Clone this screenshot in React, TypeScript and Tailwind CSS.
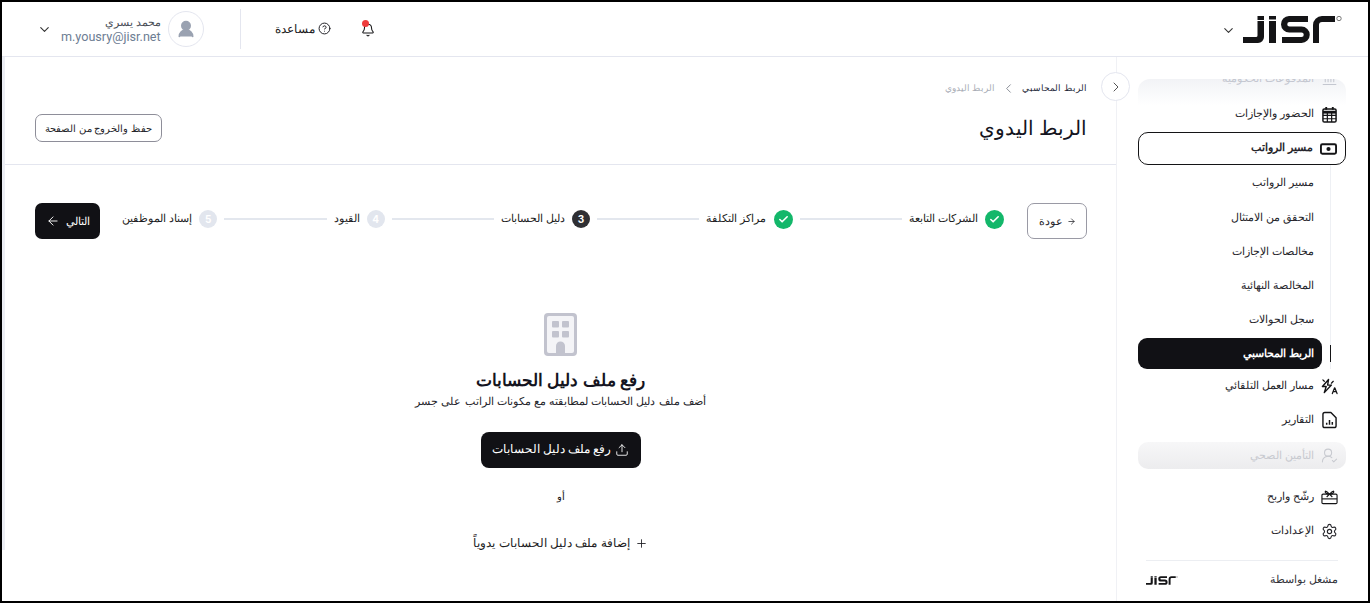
import React from "react";
import { ChevronDown, ChevronRight, ChevronLeft, CircleHelp, Bell, Upload, Plus, ArrowLeft, ArrowRight, Check, Landmark, UserRound, Settings, UserRoundCheck } from "lucide-react";

function JisrLogo({ className }: { className?: string }) {
  return (
    <svg viewBox="0 0 99 27" className={className} fill="#141416">
      <path d="M14.500 0H21v4h-6.500zM14.500 5H21v16a6 6 0 0 1-6 6H0v-6h13a1.500 1.500 0 0 0 1.500-1.500z" />
      <path d="M26 0h7v3.500h-7zM26 5h7v22h-7z" />
      <path d="M46 0h19v6H46.500a2 2 0 0 0 0 4.500h12a8.200 8.200 0 0 1 0 16.500H39v-6h19.500a2.200 2.200 0 0 0 0-4.500h-12A8.200 8.200 0 0 1 46 0z" />
      <path d="M70 27V9a9 9 0 0 1 9-9h13v6H79a3 3 0 0 0-3 3v18z" />
      <circle cx="96" cy="2.500" r="2.200" fill="none" stroke="#777" strokeWidth="1" />
    </svg>
  );
}

function CalendarSolid() {
  return (
    <svg viewBox="0 0 16 17" className="w-[15px] h-[16px]" fill="none" stroke="#141416">
      <path d="M4.500 0v3M11.500 0v3" strokeWidth="2" />
      <rect x="1" y="2" width="14" height="14" rx="1.500" strokeWidth="1.600" />
      <path d="M1 5.500h14" strokeWidth="3" />
      <path d="M1 9h14M1 12.500h14M5.700 6v10M10.300 6v10" strokeWidth="1.300" />
    </svg>
  );
}

function MoneyIcon() {
  return (
    <svg viewBox="0 0 18 12" className="w-[17px] h-[12px]" fill="none" stroke="#141416" strokeWidth="2">
      <rect x="1" y="1" width="16" height="10" rx="1.500" />
      <circle cx="9" cy="6" r="2.200" fill="#141416" stroke="none" />
    </svg>
  );
}

function AutoIcon() {
  return (
    <svg viewBox="0 0 18 17" className="w-[17px] h-[17px]" fill="none" stroke="#141416" strokeWidth="1.500" strokeLinejoin="round" strokeLinecap="round">
      <path d="M8 1 1.500 8.500h4L3.500 15 11 7H7z" />
      <path d="M3.500 3 2 1.500M11 5l2-2" strokeWidth="1.300" />
      <path d="M12 16l2.300-6 .4 0 2.300 6M13 14h3.200" strokeWidth="1.300" />
    </svg>
  );
}

function ReportIcon() {
  return (
    <svg viewBox="0 0 16 18" className="w-[15px] h-[18px]" fill="none" stroke="#141416" strokeWidth="1.500" strokeLinejoin="round">
      <path d="M3 1h6.500L15 6.500V15a2 2 0 0 1-2 2H3a2 2 0 0 1-2-2V3a2 2 0 0 1 2-2z" />
      <path d="M5 14v-2M8 14V9M11 14v-3" strokeWidth="1.600" />
    </svg>
  );
}

function GiftIcon() {
  return (
    <svg viewBox="0 0 18 16" className="w-[18px] h-[16px]" fill="none" stroke="#141416" strokeWidth="1.200" strokeLinejoin="round">
      <rect x="1" y="5" width="16" height="10" rx="1.200" />
      <path d="M1 10h16" />
      <path d="M9 5 6 8M9 5l3 3M9 5C7 3 5 1 4.500 2.200 4 3.500 6 5 9 5zM9 5c2-2 4-4 4.500-2.800C14 3.500 12 5 9 5z" />
    </svg>
  );
}

const Nav = ({ icon, label, active, className = "" }: { icon: React.ReactNode; label: string; active?: boolean; className?: string }) => (
  <div className={`flex items-center gap-[7px] pr-[8px] text-[10.600px] leading-none text-[#26262b] ${active ? "font-semibold" : ""} ${className}`}>
    <span className="w-[17px] flex justify-center">{icon}</span>
    <span>{label}</span>
  </div>
);

const Sub = ({ label }: { label: string }) => (
  <div className="h-[34.300px] flex items-center pr-[32px] text-[10.600px] text-[#26262b]">{label}</div>
);

const Step = ({ n, done, current, label }: { n: string; done?: boolean; current?: boolean; label: string }) => (
  <div className="flex items-center gap-[7px] shrink-0">
    {done ? (
      <span className="w-[19px] h-[19px] rounded-full bg-[#13b76a] flex items-center justify-center">
        <Check className="w-[11px] h-[11px] text-white" strokeWidth={3.500} />
      </span>
    ) : (
      <span className={`w-[18px] h-[18px] rounded-full flex items-center justify-center text-[10px] font-bold text-white ${current ? "bg-[#2f2f33]" : "bg-[#e2e6ee]"}`}>{n}</span>
    )}
    <span className="text-[11.400px] text-[#1d1d22]">{label}</span>
  </div>
);

const Line = () => <div className="flex-1 h-[2px] bg-[#e3e7ee] mx-[7px]" />;

export default function App() {
  return (
    <div dir="rtl" className="w-[1370px] h-[603px] overflow-hidden border-2 border-black bg-white flex flex-col font-['Inter','Noto_Sans',sans-serif] text-[#141416]">
      <header className="h-[55px] shrink-0 border-b border-[#e4e6ef] flex items-center justify-between pr-[26px] pl-[35px]">
        <div className="flex items-center gap-[7px]">
          <JisrLogo className="w-[99px] h-[27px]" />
          <ChevronDown className="w-[15px] h-[15px] text-[#333] mt-[3px]" strokeWidth={1.700} />
        </div>
        <div className="flex items-center h-full">
          <div className="relative ml-[30px] mt-[1px]">
            <Bell className="w-[14px] h-[14px] text-[#141416]" strokeWidth={1.800} />
            <span className="absolute -top-[3px] right-[6px] w-[7px] h-[7px] rounded-full bg-[#ee3c3c]" />
          </div>
          <div className="flex items-center gap-[3px] text-[12.200px] text-[#1d1d22] ml-[34px]">
            <CircleHelp className="w-[13px] h-[13px]" strokeWidth={1.800} />
            <span>مساعدة</span>
          </div>
          <div className="w-px h-[40px] bg-[#e4e6ef] ml-[36px]" />
          <div className="flex items-center gap-[7px]">
            <span className="w-[36px] h-[36px] rounded-full border border-[#e4e6ef] flex items-center justify-center">
              <UserRound className="w-[20px] h-[20px] text-[#9aa2b1]" fill="#9aa2b1" />
            </span>
            <div className="flex flex-col items-start leading-none">
              <span className="text-[11.200px] text-[#4b4f58] leading-[14px]">محمد يسري</span>
              <span dir="ltr" className="font-['Roboto',sans-serif] text-[12.600px] text-[#6d7d93] leading-[15px]">m.yousry@jisr.net</span>
            </div>
            <ChevronDown className="w-[15px] h-[15px] text-[#333] mr-[2px]" strokeWidth={1.800} />
          </div>
        </div>
      </header>

      <div className="flex-1 flex min-h-0 relative">
        <aside className="w-[252px] shrink-0 border-l border-[#f0f1f5] pr-[22px] pl-[21px] pt-[22px] flex flex-col">
          <div className="h-[26px] rounded-t-[12px] bg-gradient-to-b from-[#f2f3f6] to-white overflow-hidden flex items-start gap-[7px] pr-[8px] text-[10.600px] text-[#c4c7d0]">
            <span className="w-[17px] flex justify-center"><Landmark className="w-[17px] h-[17px] -mt-[10px]" strokeWidth={1.500} /></span>
            <span className="-mt-[8px]">المدفوعات الحكومية</span>
          </div>
          <Nav className="h-[19px] mb-[8px]" icon={<CalendarSolid />} label="الحضور والإجازات" />
          <div className="h-[33px] rounded-[10px] border border-[#141416] flex items-center">
            <Nav active className="pr-[7px]" icon={<MoneyIcon />} label="مسير الرواتب" />
          </div>
          <div className="relative pt-[1px]">
            <div className="absolute top-0 bottom-0 right-[15px] w-px bg-[#eef0f4]" />
            <div className="absolute top-[180px] h-[17px] right-[15px] w-px bg-[#141416]" />
            <Sub label="مسير الرواتب" />
            <Sub label="التحقق من الامتثال" />
            <Sub label="مخالصات الإجازات" />
            <Sub label="المخالصة النهائية" />
            <Sub label="سجل الحوالات" />
            <div className="h-[31px] mt-[1px] mr-[24px] rounded-[9px] bg-[#111115] text-white text-[10.600px] font-semibold flex items-center pr-[8px]">
              <span>الربط المحاسبي</span>
            </div>
          </div>
          <Nav className="h-[34px]" icon={<AutoIcon />} label="مسار العمل التلقائي" />
          <Nav className="h-[34px]" icon={<ReportIcon />} label="التقارير" />
          <div className="h-[27px] mt-[5px] rounded-[10px] bg-gradient-to-b from-[#f7f7f8] to-[#ececee] flex items-center gap-[7px] pr-[8px] text-[10.600px] text-[#c8cad0]">
            <span className="w-[17px] flex justify-center"><UserRoundCheck className="w-[17px] h-[17px]" strokeWidth={1.500} /></span>
            <span>التأمين الصحي</span>
          </div>
          <Nav className="h-[34px] mt-[11px]" icon={<GiftIcon />} label="رشّح واربح" />
          <Nav className="h-[34px]" icon={<Settings className="w-[17px] h-[17px]" strokeWidth={1.600} />} label="الإعدادات" />
          <div className="mt-[12px] mx-[8px] border-t border-[#eceef2] pt-[11px] flex items-center justify-between text-[10.600px] text-[#33343a]">
            <span>مشغل بواسطة</span>
            <JisrLogo className="w-[32px] h-[9px]" />
          </div>
        </aside>

        <button className="absolute top-[15px] right-[238px] w-[29px] h-[29px] rounded-full bg-white border border-[#e4e6ef] flex items-center justify-center z-10">
          <ChevronRight className="w-[16px] h-[16px] text-[#555]" strokeWidth={1.500} />
        </button>

        <main className="flex-1 min-w-0 flex flex-col border-l-[3px] border-[#eceef4] mb-[51px] h-[493px]">
          <div className="h-[108px] shrink-0 border-b border-[#e4e6ef] pr-[29px] pl-[30px] pt-[24px] flex justify-between">
            <div>
              <div className="flex items-center gap-[6px] text-[9px] h-[14px]">
                <span className="text-[#1f2a3a]">الربط المحاسبي</span>
                <ChevronLeft className="w-[15px] h-[15px] text-[#8b8f98]" strokeWidth={1.600} />
                <span className="text-[#a9adb6]">الربط اليدوي</span>
              </div>
              <h1 className="text-[20px] font-medium mt-[19px] leading-[28px] text-[#141420]">الربط اليدوي</h1>
            </div>
            <button className="self-start mt-[33px] h-[28px] w-[127px] rounded-[7px] border border-[#8e8e99] text-[10px] text-[#26262b] bg-white">حفظ والخروج من الصفحة</button>
          </div>

          <div className="flex items-center pr-[29px] pl-[30px] pt-[38px]">
            <button className="w-[60px] h-[36px] shrink-0 rounded-[7px] border border-[#9a9aa5] text-[11px] flex items-center justify-center gap-[4px] ml-[23px] text-[#26262b]">
              <ArrowRight className="w-[9px] h-[9px]" strokeWidth={2} />
              <span>عودة</span>
            </button>
            <div className="flex-1 flex items-center -mt-[4px]">
              <Step n="1" done label="الشركات التابعة" />
              <Line />
              <Step n="2" done label="مراكز التكلفة" />
              <Line />
              <Step n="3" current label="دليل الحسابات" />
              <Line />
              <Step n="4" label="القيود" />
              <Line />
              <Step n="5" label="إسناد الموظفين" />
            </div>
            <button className="w-[65px] h-[36px] shrink-0 rounded-[7px] bg-[#111115] text-white text-[11px] font-medium flex items-center justify-center gap-[6px] mr-[22px]">
              <span>التالي</span>
              <ArrowLeft className="w-[14px] h-[14px]" strokeWidth={1.600} />
            </button>
          </div>

          <div className="flex flex-col items-center pt-[74px]">
            <Building />
            <h2 className="text-[17px] font-semibold leading-[22px] mt-[13px] text-[#141420]">رفع ملف دليل الحسابات</h2>
            <p className="text-[11.200px] leading-[18px] mt-[1px] text-[#26262b]">أضف ملف دليل الحسابات لمطابقته مع مكونات الراتب على جسر</p>
            <button className="mt-[22px] w-[160px] h-[36px] rounded-[8px] bg-[#111115] text-white text-[11.600px] font-medium flex items-center justify-center gap-[4px]">
              <Upload className="w-[14px] h-[14px]" strokeWidth={1.500} />
              <span>رفع ملف دليل الحسابات</span>
            </button>
            <span className="mt-[20px] text-[10px] font-medium leading-[16px]">أو</span>
            <div className="mt-[30px] flex items-center gap-[5px] text-[12px] text-[#1d1d22]">
              <Plus className="w-[13px] h-[13px]" strokeWidth={1.600} />
              <span>إضافة ملف دليل الحسابات يدوياً</span>
            </div>
          </div>
        </main>
      </div>
    </div>
  );
}

function Building() {
  return (
    <svg viewBox="0 0 33 43" className="w-[33px] h-[43px]">
      <rect width="33" height="43" rx="4" fill="#c2c3ce" />
      <rect x="3" y="3" width="27" height="37" rx="2" fill="#f4f4f7" />
      <g fill="#c2c3ce">
        <rect x="8" y="8" width="7" height="6.500" rx="1" />
        <rect x="18" y="8" width="7" height="6.500" rx="1" />
        <rect x="8" y="18" width="7" height="6.500" rx="1" />
        <rect x="18" y="18" width="7" height="6.500" rx="1" />
        <path d="M12 41V33a4.500 4.500 0 0 1 9 0v8z" />
      </g>
    </svg>
  );
}
